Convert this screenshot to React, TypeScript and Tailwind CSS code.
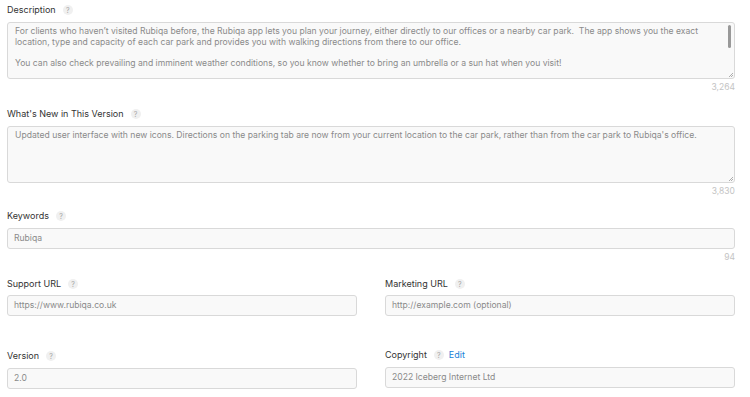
import React from "react";

const font = { fontFamily: 'Inter, "Liberation Sans", Arial, sans-serif' };

function Help() {
  return (
    <span className="ml-[7px] inline-flex h-[10px] w-[10px] items-center justify-center rounded-full bg-[#f0f0f0] text-[7px] leading-none text-[#a6a6a6]">
      ?
    </span>
  );
}

function Label({ text, extra }: { text: string; extra?: React.ReactNode }) {
  return (
    <div className="flex h-[12px] items-center text-[9px] leading-[12px] text-[#333]">
      <span>{text}</span>
      <Help />
      {extra}
    </div>
  );
}

function Counter({ value }: { value: string }) {
  return (
    <div className="mt-[2px] h-[12px] text-right text-[8.5px] leading-[12px] text-[#c4c4c4]">{value}</div>
  );
}

function ResizeHandle() {
  return (
    <svg className="absolute bottom-[1px] right-[1px]" width="4" height="4" viewBox="0 0 4 4">
      <path d="M4 0 L0 4 M4 2 L2 4" stroke="#9a9a9a" strokeWidth="0.8" />
    </svg>
  );
}

function Input({ value }: { value: string }) {
  return (
    <div className="flex h-[21px] items-center rounded-[3px] border border-[#d9d9d9] bg-[#f9f9f9] px-[6px] text-[8.6px] text-[#8a8a8a]">
      {value}
    </div>
  );
}

export default function App() {
  return (
    <div className="h-[397px] w-[750px] overflow-hidden bg-white px-[7px] pr-[15px]" style={font}>
      <div className="pt-[4px]">
        <Label text="Description" />
        <div className="relative mt-[6px] h-[57px] overflow-hidden rounded-[3px] border border-[#d9d9d9] bg-[#f9f9f9] pl-[7px] pt-[3px] text-[8.6px] leading-[10.5px] text-[#8a8a8a]">
          <div className="whitespace-pre">
            {"For clients who haven\u2019t visited Rubiqa before, the Rubiqa app lets you plan your journey, either directly to our offices or a nearby car park.  The app shows you the exact"}
          </div>
          <div className="whitespace-pre">
            {"location, type and capacity of each car park and provides you with walking directions from there to our office."}
          </div>
          <div className="h-[10.5px]" />
          <div className="whitespace-pre">
            {"You can also check prevailing and imminent weather conditions, so you know whether to bring an umbrella or a sun hat when you visit!"}
          </div>
          <div className="absolute right-[3px] top-[2px] h-[23px] w-[3px] rounded-full bg-[#999]" />
          <ResizeHandle />
        </div>
        <Counter value="3,264" />
      </div>

      <div className="mt-[15px]">
        <Label text="What's New in This Version" />
        <div className="relative mt-[6px] h-[57px] rounded-[3px] border border-[#d9d9d9] bg-[#f9f9f9] pl-[7px] pt-[3px] text-[8.6px] leading-[10.5px] text-[#8a8a8a]">
          <div className="whitespace-pre">
            Updated user interface with new icons. Directions on the parking tab are now from your current location to the car park, rather than from the car park to Rubiqa's office.
          </div>
          <ResizeHandle />
        </div>
        <Counter value="3,830" />
      </div>

      <div className="mt-[13px]">
        <Label text="Keywords" />
        <div className="mt-[6px]">
          <Input value="Rubiqa" />
        </div>
        <Counter value="94" />
      </div>

      <div className="mt-[15px] grid grid-cols-2 gap-x-[28px]">
        <div>
          <Label text="Support URL" />
          <div className="mt-[5px]">
            <Input value="https://www.rubiqa.co.uk" />
          </div>
        </div>
        <div>
          <Label text="Marketing URL" />
          <div className="mt-[5px]">
            <Input value="http://example.com (optional)" />
          </div>
        </div>
        <div className="mt-[34px]">
          <Label text="Version" />
          <div className="mt-[6px]">
            <Input value="2.0" />
          </div>
        </div>
        <div className="mt-[33px]">
          <Label
            text="Copyright"
            extra={<span className="ml-[5px] text-[9px] text-[#1b7fd8]">Edit</span>}
          />
          <div className="mt-[6px]">
            <Input value="2022 Iceberg Internet Ltd" />
          </div>
        </div>
      </div>
    </div>
  );
}
